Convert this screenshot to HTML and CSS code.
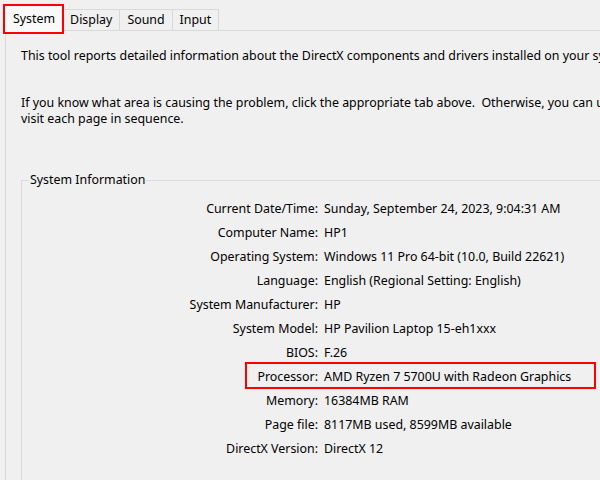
FILE: index.html
```html
<!DOCTYPE html>
<html lang="en">
<head>
    <meta charset="UTF-8">
    <title>DirectX Diagnostic Tool</title>
    <link rel="stylesheet" href="styles.css">
</head>
<body>
    <div class="tabs">
        <div class="tab active">System</div>
        <div class="tab">Display</div>
        <div class="tab">Sound</div>
        <div class="tab">Input</div>
    </div>

    <div class="pane">
        <p class="intro">This tool reports detailed information about the DirectX components and drivers installed on your system.</p>
        <p class="intro">If you know what area is causing the problem, click the appropriate tab above.&nbsp; Otherwise, you can use the "Next Page" button below to<br>visit each page in sequence.</p>

        <fieldset class="group">
            <legend>System Information</legend>
            <div class="info">
                <div class="row"><span class="key">Current Date/Time:</span><span class="val">Sunday, September 24, 2023, 9:04:31 AM</span></div>
                <div class="row"><span class="key">Computer Name:</span><span class="val">HP1</span></div>
                <div class="row"><span class="key">Operating System:</span><span class="val">Windows 11 Pro 64-bit (10.0, Build 22621)</span></div>
                <div class="row"><span class="key">Language:</span><span class="val">English (Regional Setting: English)</span></div>
                <div class="row"><span class="key">System Manufacturer:</span><span class="val">HP</span></div>
                <div class="row"><span class="key">System Model:</span><span class="val">HP Pavilion Laptop 15-eh1xxx</span></div>
                <div class="row"><span class="key">BIOS:</span><span class="val">F.26</span></div>
                <div class="row"><span class="key">Processor:</span><span class="val">AMD Ryzen 7 5700U with Radeon Graphics</span><span class="mark"></span></div>
                <div class="row"><span class="key">Memory:</span><span class="val">16384MB RAM</span></div>
                <div class="row"><span class="key">Page file:</span><span class="val">8117MB used, 8599MB available</span></div>
                <div class="row"><span class="key">DirectX Version:</span><span class="val">DirectX 12</span></div>
            </div>
        </fieldset>
    </div>
</body>
</html>
```

FILE: styles.css
```css
html, body {
    margin: 0;
    padding: 0;
    background-color: #f0f0f0;
    overflow: hidden;
}
body {
    width: 700px;
    font-family: 'Noto Sans', 'Open Sans', Arial, sans-serif;
    font-size: 12.4px;
    color: #000;
    line-height: 16px;
}
.tabs {
    display: flex;
    align-items: flex-end;
    padding: 9px 0 0 5px;
    height: 21px;
}
.tab {
    height: 20px;
    line-height: 20px;
    padding: 0 7px;
    border: 1px solid #d9d9d9;
    border-bottom: none;
    margin-left: -1px;
    background-color: #f0f0f0;
}
.tab.active {
    position: relative;
    z-index: 1;
    height: 25px;
    margin: 0 1px -2px 0;
    padding: 0 6px 0 7px;
    line-height: 23px;
    background-color: #f9f9f9;
    border-color: #f9f9f9;
    outline: 2px solid #f00;
}
.pane {
    margin-left: 5px;
    border-top: 1px solid #d9d9d9;
    border-left: 1px solid #d9d9d9;
    height: 460px;
    padding: 17px 0 0 15px;
}
.intro {
    margin: 0 0 31px;
    white-space: nowrap;
}
.group {
    margin: 45px 0 0 0;
    padding: 9px 0 0 0;
    border: 1px solid #dcdcdc;
    border-right: none;
    border-bottom: none;
    height: 400px;
}
.group legend {
    padding: 0 1px;
    margin-left: 7px;
}
.info {
    display: flex;
    flex-direction: column;
}
.row {
    position: relative;
    display: flex;
    height: 24px;
    align-items: center;
}
.key {
    width: 296px;
    text-align: right;
    padding-right: 6px;
}
.mark {
    position: absolute;
    left: 223px;
    top: -3px;
    width: 347px;
    height: 23px;
    border: 2px solid #f00;
}
```
